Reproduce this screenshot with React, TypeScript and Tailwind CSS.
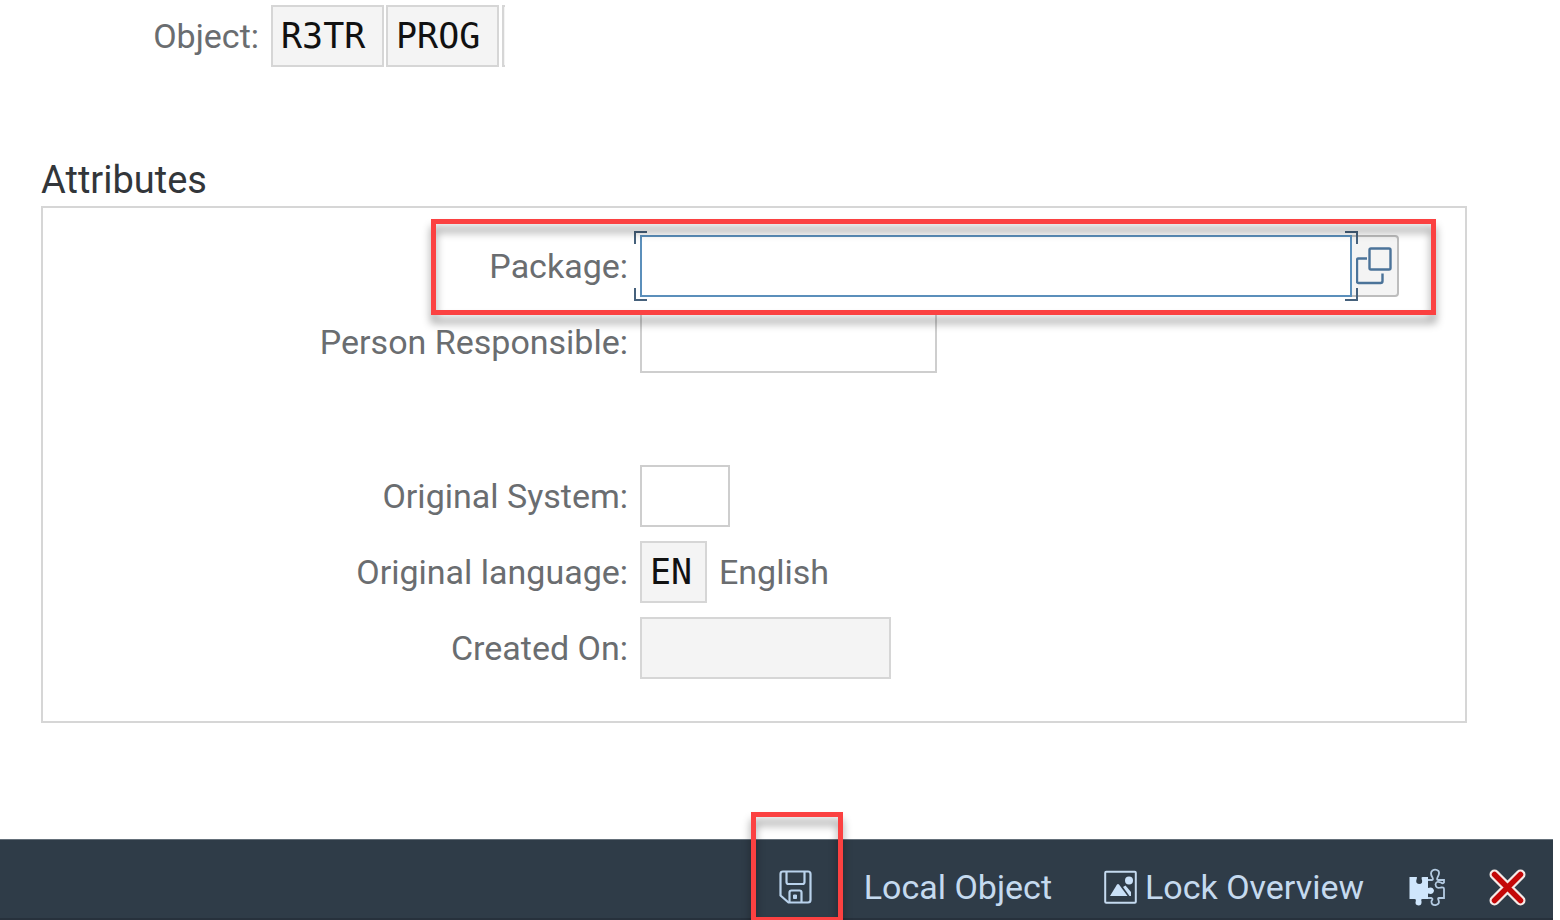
import React, { useState } from 'react';
import clsx from 'clsx';

interface FieldProps {
    id: string;
    label: string;
    width: string;
    value?: string;
    readOnly?: boolean;
    maxLength?: number;
    children?: React.ReactNode;
}

const inputBase =
    'h-[62px] border-2 px-2 text-[35px] leading-[40px] text-[#111] outline-none font-["DejaVu_Sans_Mono",monospace]';

const Field: React.FC<FieldProps> = ({ id, label, width, value = '', readOnly, maxLength, children }) => {
    const [text, setText] = useState(value);

    return (
        <div className="flex items-center">
            <label htmlFor={id} className="w-[585px] shrink-0 text-right">{label}</label>
            <input
                id={id}
                value={text}
                readOnly={readOnly}
                maxLength={maxLength}
                onChange={(e) => setText(e.target.value)}
                className={clsx(
                    inputBase,
                    width,
                    'ml-3',
                    readOnly ? 'border-[#d6d6d6] bg-[#f4f4f4]' : 'border-[#cecece] bg-white'
                )}
            />
            {children}
        </div>
    );
};

// Red annotation frame drawn over the form
const Highlight: React.FC<{ className: string }> = ({ className }) => (
    <span
        aria-hidden="true"
        className={clsx(
            'pointer-events-none absolute z-10 border-[5px] border-[#fb4141] drop-shadow-[0_8px_4px_rgba(0,0,0,0.4)]',
            className
        )}
    />
);

const FocusCorners: React.FC = () => (
    <>
        <span className="absolute -left-[6px] -top-1 size-[13px] border-l-2 border-t-2 border-[#46617c]" />
        <span className="absolute -bottom-1 -left-[6px] size-[13px] border-b-2 border-l-2 border-[#46617c]" />
        <span className="absolute -right-[6px] -top-1 size-[13px] border-r-2 border-t-2 border-[#46617c]" />
        <span className="absolute -bottom-1 -right-[6px] size-[13px] border-b-2 border-r-2 border-[#46617c]" />
    </>
);

const ValueHelpIcon: React.FC = () => (
    <svg width="38" height="38" viewBox="0 0 38 38" fill="none" stroke="#4b7399" strokeWidth="2.4">
        <rect x="13.500" y="1.500" width="21" height="21" rx="1.5" />
        <path d="M11 11.500H2.500Q1 11.500 1 13V34.500Q1 36 2.500 36H24.500Q26.500 36 26.500 34V26.500" />
    </svg>
);

const SaveIcon: React.FC = () => (
    <svg width="33" height="34" viewBox="0 0 33 34" fill="none" stroke="#b9d2ec" strokeWidth="2.2" strokeLinejoin="round">
        <path d="M4 1.500H29Q31.500 1.500 31.500 4V30Q31.500 32.500 29 32.500H9.500L1.500 25.500V4Q1.500 1.500 4 1.500Z" />
        <path d="M7.500 2V12Q7.500 14 9.500 14H23.500Q25.500 14 25.500 12V2" />
        <path d="M10.500 32V22.500Q10.500 20.500 12.500 20.500H20.500Q22.500 20.500 22.500 22.500V32" />
        <rect x="14.500" y="25" width="3" height="3.500" fill="#b9d2ec" strokeWidth="1" />
    </svg>
);

const PictureIcon: React.FC = () => (
    <svg width="33" height="34" viewBox="0 0 33 34" fill="#c9e0f7">
        <rect x="1.200" y="1.700" width="30.600" height="31" rx="1" fill="none" stroke="#c5daef" strokeWidth="2" />
        <path d="M6 26L13 14.500Q14 13.500 15 14.500L23.500 26Z" />
        <path d="M19 17L21.500 15.500L27 22V26H25.500Z" />
        <circle cx="25" cy="10.500" r="4" />
    </svg>
);

const PuzzleIcon: React.FC = () => (
    <svg width="38" height="38" viewBox="0 0 38 38" fill="none" stroke="#b4cbe2" strokeWidth="1.800">
        <path
            fill="#cfe6fc"
            stroke="none"
            d="M1.500 9H8.500Q9.500 9 8.800 10.500Q7 15.500 11 16Q15.500 16 13.700 11Q13 9 14.500 9H20V20Q25 18.500 26 22.500Q25.500 27 20 25.500V31H14.500Q12.500 31 13.500 33Q14 37.500 10.500 37.500Q6.500 37 7.800 33Q8.500 31 6.500 31H1.500Z"
        />
        <path d="M20 12H24Q25.500 12 24.500 9.500Q21.500 5 24.500 2.500Q27.500 .500 30.500 3Q32 5.500 29.500 9.500Q28.500 12 30 12H36V14.500Q35 16 33 14.500Q28 12.500 27.500 16.500Q28 21 33 19.500Q36 19 36 21V30H31Q29.500 30 30.500 32Q32 36 28 37Q23 37.500 23.500 33Q25.500 30.500 23.500 30H20" />
    </svg>
);

const CancelIcon: React.FC = () => (
    <svg width="37" height="37" viewBox="0 0 37 37" fill="none" strokeLinecap="round">
        <path d="M5.500 5.500L31.500 31.500M31.500 5.500L5.500 31.500" stroke="#f6ebe8" strokeWidth="10" />
        <path d="M5.500 5.500L31.500 31.500M31.500 5.500L5.500 31.500" stroke="#c40808" strokeWidth="5.500" />
    </svg>
);

const App: React.FC = () => {
    const [pkg, setPkg] = useState('');

    return (
        <div className="flex min-h-screen flex-col overflow-hidden bg-white font-[Roboto,sans-serif] text-[34px] leading-[40px] text-[#6a6d70]">
            <div className="flex items-center pt-[5px]">
                <label htmlFor="object-pgmid" className="w-[259px] text-right">Object:</label>
                <input
                    id="object-pgmid"
                    readOnly
                    value="R3TR"
                    className={clsx(inputBase, 'ml-3 w-[113px] border-[#d6d6d6] bg-[#f4f4f4]')}
                />
                <input
                    aria-label="Object type"
                    readOnly
                    value="PROG"
                    className={clsx(inputBase, 'ml-[2px] w-[113px] border-[#d6d6d6] bg-[#f4f4f4]')}
                />
                <span className="ml-[3px] h-[62px] w-[3px] border-y-2 border-l-2 border-[#d6d6d6] bg-[#f4f4f4]" />
            </div>

            <section className="ml-[41px] mr-[93px] mt-[93px]">
                <h2 className="pb-[6px] text-[38px] text-[#32363a]">Attributes</h2>
                <div className="flex flex-col gap-[14px] border-2 border-[#d6d6d6] pb-[42px] pr-[66px] pt-[27px]">
                    <div className="relative flex items-center">
                        <label htmlFor="package" className="w-[585px] shrink-0 text-right">Package:</label>
                        <div className="relative ml-3 flex-1">
                            <input
                                id="package"
                                value={pkg}
                                onChange={(e) => setPkg(e.target.value)}
                                className={clsx(inputBase, 'block w-full border-[#5b8fbb] bg-white')}
                            />
                            <FocusCorners />
                        </div>
                        <button
                            type="button"
                            aria-label="Value help"
                            className="flex h-[62px] w-[47px] items-center justify-center rounded-r border-2 border-l-0 border-[#bdbdbd] bg-[#f4f4f4]"
                        >
                            <ValueHelpIcon />
                        </button>
                        <Highlight className="-bottom-[18px] -right-[37px] -top-4 left-[388px]" />
                    </div>

                    <Field id="responsible" label="Person Responsible:" width="w-[297px]" maxLength={12} />
                    <div className="h-16" />
                    <Field id="system" label="Original System:" width="w-[90px]" maxLength={3} />
                    <Field id="language" label="Original language:" width="w-[67px]" value="EN" readOnly>
                        <span className="ml-3">English</span>
                    </Field>
                    <Field id="created" label="Created On:" width="w-[251px]" readOnly />
                </div>
            </section>

            <footer className="mr-[7px] mt-auto flex h-[81px] items-center justify-end gap-[52px] border-b-2 border-t border-b-[#27313c] border-t-[#65707a] bg-[#2f3c48] pr-[27px] pt-4 text-[#c5daef]">
                <button type="button" aria-label="Save" className="relative">
                    <SaveIcon />
                    <Highlight className="-left-[28px] -right-[31px] -top-[58px] h-[110px]" />
                </button>
                <button type="button">Local Object</button>
                <button type="button" className="flex items-center gap-2">
                    <PictureIcon />
                    Lock Overview
                </button>
                <div className="-ml-2 flex gap-[43px]">
                    <button type="button" aria-label="Own requests">
                        <PuzzleIcon />
                    </button>
                    <button type="button" aria-label="Cancel">
                        <CancelIcon />
                    </button>
                </div>
            </footer>
        </div>
    );
};

export default App;
